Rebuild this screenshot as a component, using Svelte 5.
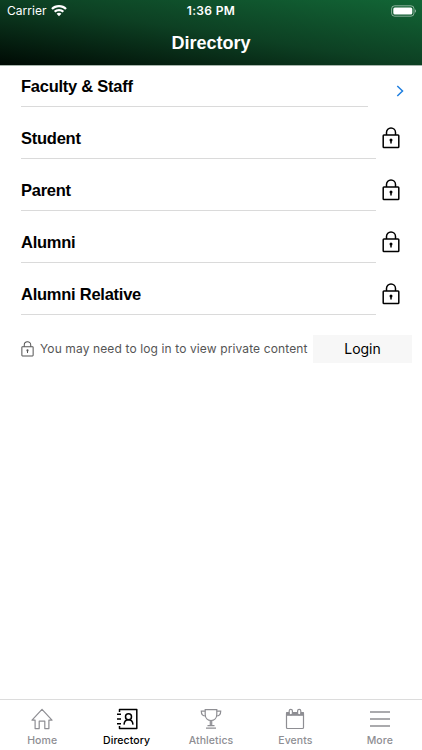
<script lang="ts">
  const groups = [
    { name: "Faculty & Staff", locked: false },
    { name: "Student", locked: true },
    { name: "Parent", locked: true },
    { name: "Alumni", locked: true },
    { name: "Alumni Relative", locked: true },
  ];

  const tabs = ["Home", "Directory", "Athletics", "Events", "More"];
  let active = $state("Directory");
</script>

{#snippet lock()}
  <svg class="lock" viewBox="0 0 18 22" fill="none" stroke="currentColor">
    <rect x="1.2" y="8" width="15.6" height="12.6" rx="0.8" />
    <path d="M4.500 8V5.500a4.500 4.500 0 0 1 9 0V8" />
    <circle cx="9" cy="13" r="1.5" fill="currentColor" stroke="none" />
    <path d="M9 13v3.600" />
  </svg>
{/snippet}

<div class="screen">
  <header>
    <div class="status">
      <span class="carrier">
        Carrier
        <svg width="16" height="12" viewBox="0 0 16 12" fill="#fff">
          <path d="M8 0C4.900 0 2.100 1.200 0.200 3.200L1.800 4.800C3.400 3.200 5.600 2.300 8 2.300s4.600.9 6.200 2.500l1.600-1.600C13.900 1.200 11.100 0 8 0z" />
          <path d="M8 3.900c-2 0-3.800.8-5.100 2.100l1.600 1.600C5.400 6.700 6.600 6.200 8 6.200s2.600.5 3.500 1.400L13.100 6C11.800 4.700 10 3.900 8 3.900z" />
          <path d="M8 7.800c-.9 0-1.800.4-2.400 1L8 11.300l2.400-2.500c-.6-.6-1.500-1-2.400-1z" />
        </svg>
      </span>
      <span class="time">1:36 PM</span>
      <svg class="battery" width="26" height="12" viewBox="0 0 26 12">
        <rect x="0.600" y="0.800" width="22.400" height="10.400" rx="3" fill="none" stroke="#fff" stroke-opacity="0.5" />
        <rect x="2.300" y="2.400" width="19" height="7.200" rx="1.500" fill="#fff" />
        <path d="M24 4.200v3.600c1.400-.6 1.400-3 0-3.600z" fill="#fff" fill-opacity="0.5" />
      </svg>
    </div>
    <h1>Directory</h1>
  </header>

  <main>
    <ul>
      {#each groups as group}
        <li class:open={!group.locked}>
          <span class="name">{group.name}</span>
          <span class="accessory">
            {#if group.locked}
              {@render lock()}
            {:else}
              <svg class="chevron" width="8" height="12" viewBox="0 0 8 12" fill="none">
                <path d="M1.300 1l5.200 5-5.200 5" stroke="#1f7fe0" stroke-width="1.500" />
              </svg>
            {/if}
          </span>
        </li>
      {/each}
    </ul>

    <div class="login">
      {@render lock()}
      <span class="hint">You may need to log in to view private content</span>
      <button>Login</button>
    </div>
  </main>

  <nav>
    {#each tabs as tab}
      <button class="tab" class:active={tab === active} onclick={() => (active = tab)}>
        <svg width="22" height="22" viewBox="0 0 22 22" fill="none" stroke="currentColor" stroke-width="1.200">
          {#if tab === "Home"}
            <path d="M1 12.200L11 1.300l10 10.900H17.900v8.400H13.800v-7.400H8.200v7.400H4.100v-8.400z" stroke-linejoin="round" />
          {:else if tab === "Directory"}
            <g stroke-width="1.500">
              <path d="M3.500 4V1.500h17.300v19H3.500V18" stroke-linejoin="round" />
              <path d="M1 6.200h4M1 11h4M1 15.800h4" />
              <circle cx="12.500" cy="8.800" r="3" />
              <path d="M8 16.600c.3-3 2-4.800 4.500-4.800s4.200 1.800 4.500 4.800" />
            </g>
          {:else if tab === "Athletics"}
            <path d="M5.200 1.600h11.600v4.600c0 3.900-2.500 6.300-5.800 6.300S5.200 10.100 5.200 6.200z" />
            <path d="M5.200 3.200H1.300c0 3 1.600 4.800 4.500 4.800M16.800 3.200h3.900c0 3-1.600 4.800-4.500 4.800M10.300 12.500v4.600M11.700 12.500v4.600M7.500 17.600h7M6 20.200h10" />
          {:else if tab === "Events"}
            <rect x="2.500" y="4.500" width="17" height="16" rx="1" stroke-width="1.200" />
            <path d="M2 4.200h18v3.600H2z" fill="currentColor" stroke="none" />
            <rect x="5.200" y="1.300" width="3.200" height="5.600" rx="1.600" fill="#fff" />
            <rect x="13.600" y="1.300" width="3.200" height="5.600" rx="1.600" fill="#fff" />
          {:else}
            <path d="M1 4h20M1 11h20M1 18h20" stroke-width="1.600" />
          {/if}
        </svg>
        <span>{tab}</span>
      </button>
    {/each}
  </nav>
</div>

<style>
  :global(body) {
    background: #fff;
  }
  .screen {
    display: flex;
    flex-direction: column;
    height: 750px;
    overflow: hidden;
    color: #000;
    font-family: Inter, "Liberation Sans", sans-serif;
  }
  header {
    height: 65px;
    border-bottom: 1px solid #a7b5ac;
    background: linear-gradient(to top right, #000a04, #0d4023 50%, #126636);
    background-clip: padding-box;
    color: #fff;
  }
  .status {
    display: grid;
    grid-template-columns: 1fr auto 1fr;
    align-items: center;
    height: 21px;
    padding: 0 7px;
    font-size: 12px;
  }
  .carrier {
    display: flex;
    align-items: center;
    gap: 4px;
    letter-spacing: 0.05px;
  }
  .time {
    font-weight: 600;
    letter-spacing: 0.35px;
  }
  .battery {
    justify-self: end;
    margin-right: -2px;
  }
  h1 {
    margin: 0;
    font: bold 18px/44px "Liberation Sans", sans-serif;
    text-align: center;
  }
  main {
    flex: 1;
  }
  ul {
    margin: 0;
    padding: 0 0 0 21px;
    list-style: none;
  }
  li {
    display: flex;
    height: 52px;
  }
  li.open {
    height: 41px;
  }
  .name {
    box-sizing: border-box;
    width: 355px;
    padding-top: 21px;
    border-bottom: 1px solid #dadada;
    font: bold 16.5px/20px "Liberation Sans", sans-serif;
    letter-spacing: -0.25px;
  }
  .open .name {
    width: 347px;
    padding-top: 10px;
  }
  .accessory {
    padding: 20px 0 0 6px;
  }
  .open .accessory {
    padding: 19px 0 0 28px;
  }
  .accessory svg {
    display: block;
  }
  .lock {
    width: 18px;
    height: 22px;
    stroke-width: 1.5;
  }
  .login {
    display: flex;
    align-items: center;
    height: 28px;
    margin-top: 20px;
    padding: 0 10px 0 21px;
    color: #555;
  }
  .login .lock {
    width: 13px;
    height: 16px;
    stroke-width: 1.4;
  }
  .hint {
    margin-left: 6px;
    font-size: 12px;
    letter-spacing: 0.12px;
    line-height: 14px;
    white-space: nowrap;
  }
  .login button {
    width: 99px;
    height: 28px;
    margin-left: auto;
    padding: 0 0 2px;
    border: 0;
    background: #f7f7f7;
    color: #000;
    font: 14px Inter, sans-serif;
  }
  nav {
    display: grid;
    grid-template-columns: repeat(5, 1fr);
    height: 50px;
    border-top: 1px solid #dcdcdc;
  }
  .tab {
    display: flex;
    flex-direction: column;
    align-items: center;
    padding: 8px 0 0;
    border: 0;
    background: none;
    color: #8e8e93;
    font: 500 10.5px/14px Inter, sans-serif;
    letter-spacing: 0.08px;
  }
  .tab span {
    margin-top: 4px;
  }
  .tab.active {
    color: #000;
  }
</style>
